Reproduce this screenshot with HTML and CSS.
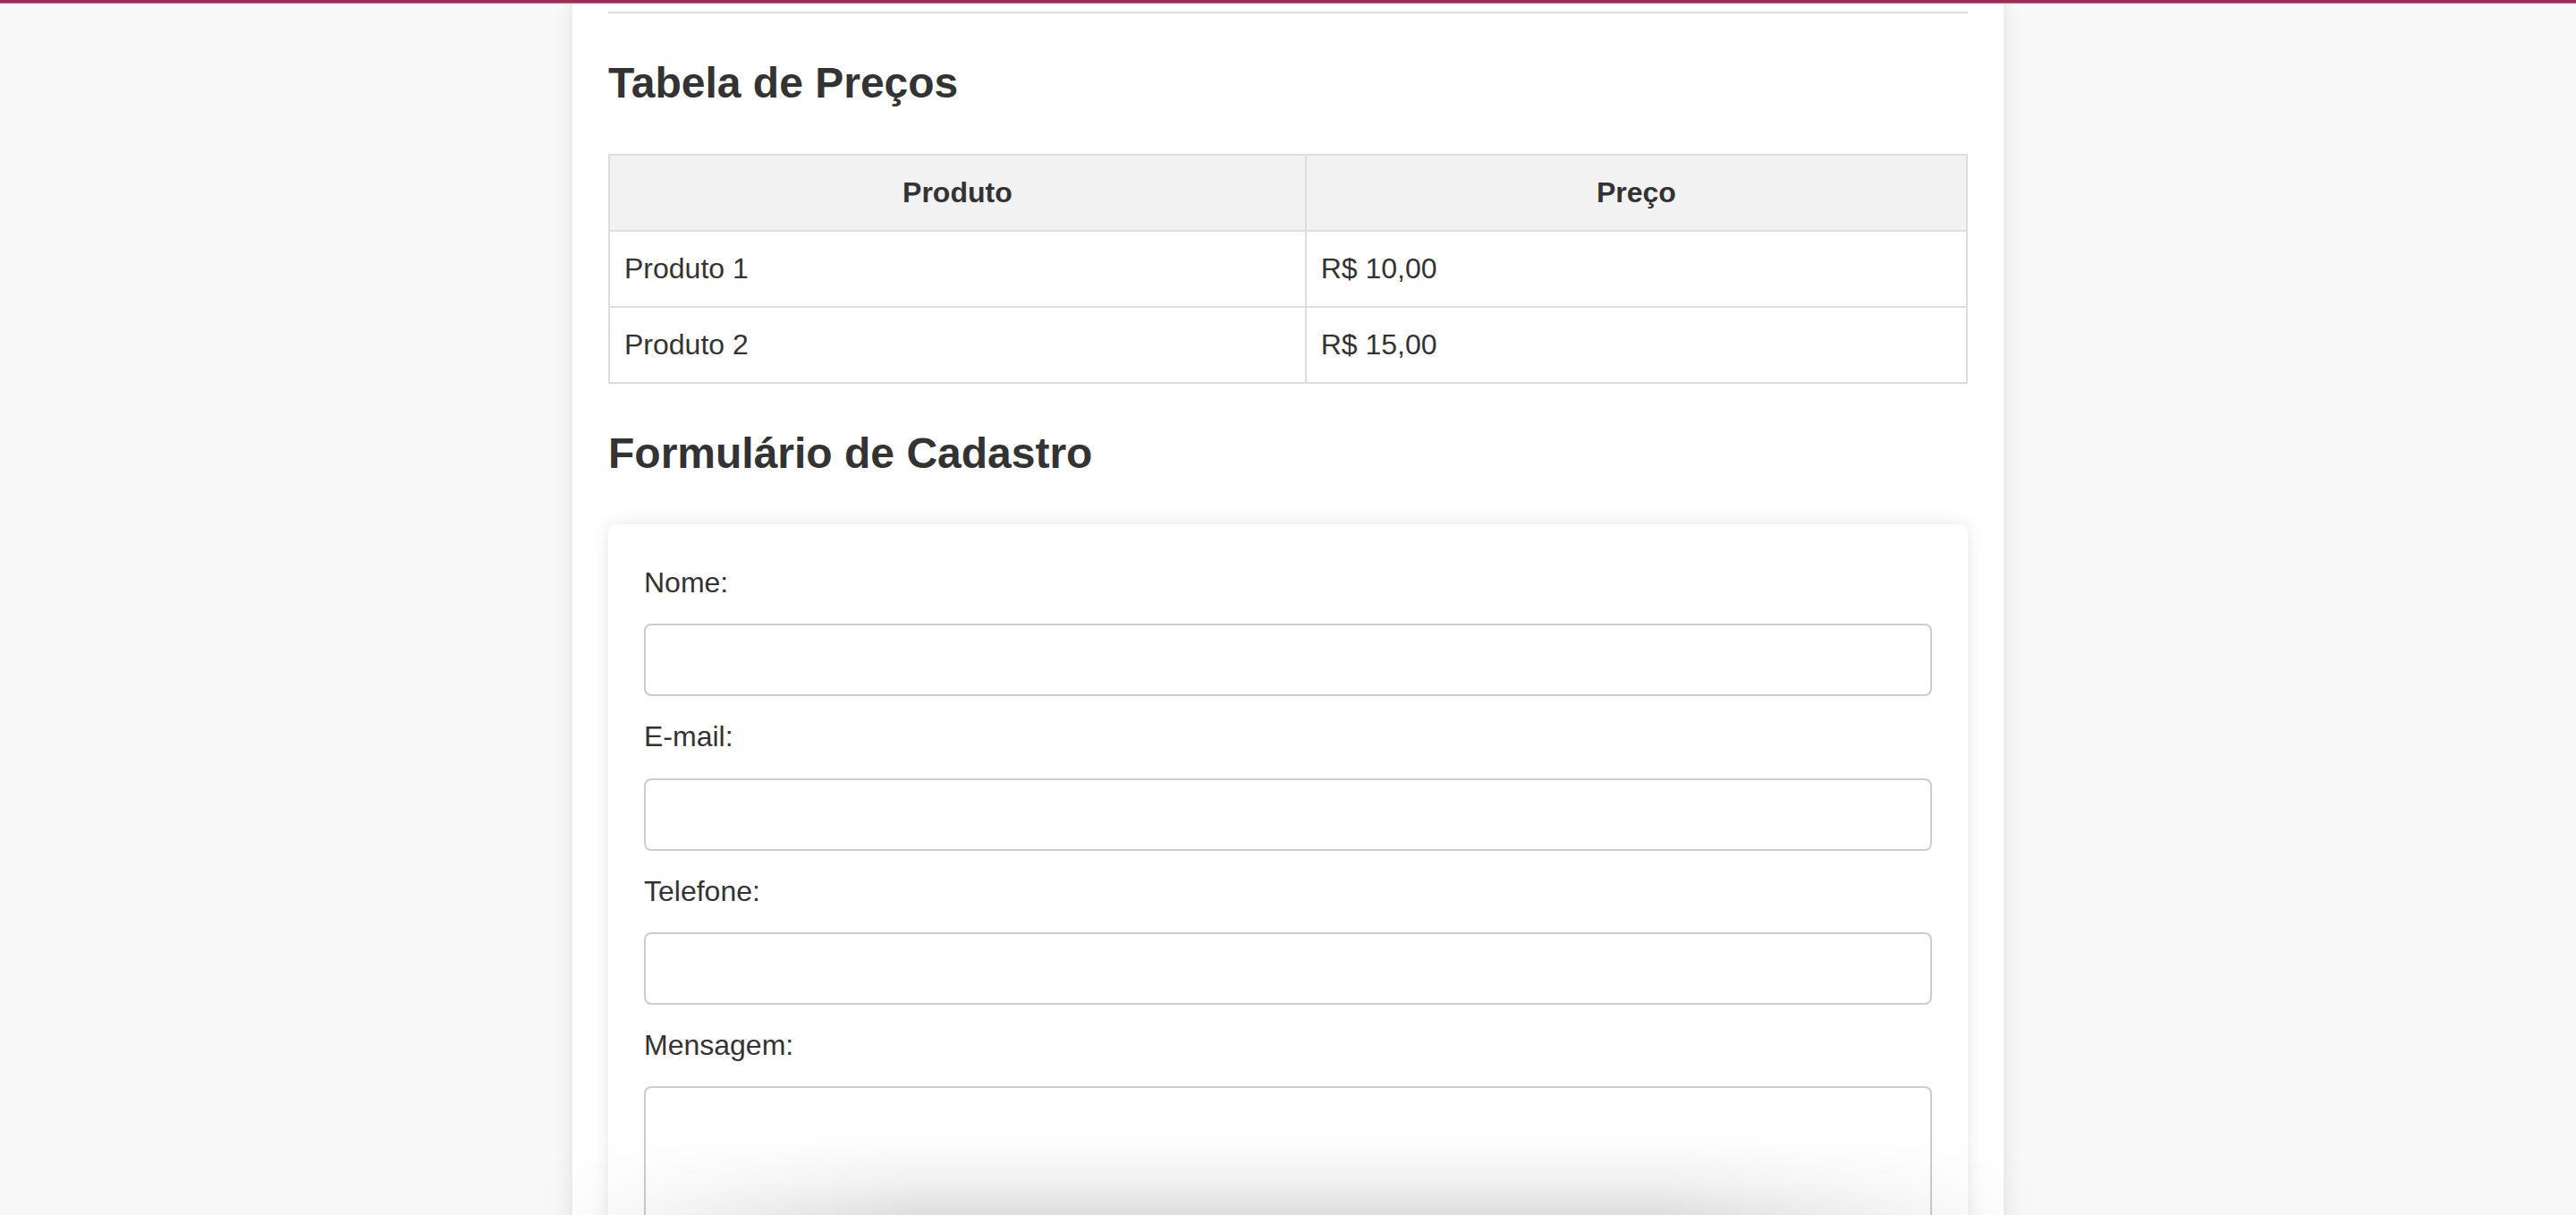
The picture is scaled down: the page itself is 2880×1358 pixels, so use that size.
FILE: index.html
```html
<!DOCTYPE html>
<html lang="pt-BR">
<head>
<meta charset="utf-8">
<title>Tabela de Preços</title>
<link rel="stylesheet" href="styles.css">
</head>
<body>
<div class="topbar"></div>
<main class="container">
  <hr class="divider">
  <h2 class="section-title">Tabela de Preços</h2>
  <table class="price-table">
    <thead>
      <tr><th>Produto</th><th>Preço</th></tr>
    </thead>
    <tbody>
      <tr><td>Produto 1</td><td>R$ 10,00</td></tr>
      <tr><td>Produto 2</td><td>R$ 15,00</td></tr>
    </tbody>
  </table>
  <h2 class="section-title">Formulário de Cadastro</h2>
  <form class="form-card">
    <label class="field-label" for="nome">Nome:</label>
    <input class="field-input" id="nome" type="text">
    <label class="field-label" for="email">E-mail:</label>
    <input class="field-input" id="email" type="email">
    <label class="field-label" for="tel">Telefone:</label>
    <input class="field-input" id="tel" type="tel">
    <label class="field-label" for="msg">Mensagem:</label>
    <textarea class="field-input field-textarea" id="msg"></textarea>
  </form>
</main>
<div class="bottom-shade"></div>
</body>
</html>
```
FILE: styles.css
```css
html, body {
  margin: 0;
  padding: 0;
}
body {
  background: #f8f8f8;
  font-family: "Liberation Sans", Arial, Helvetica, sans-serif;
  font-size: 32px;
  line-height: 1.6;
  color: #333;
  height: 1358px;
  overflow: hidden;
}
.topbar {
  position: fixed;
  top: 0;
  left: 0;
  right: 0;
  height: 3px;
  background: #a02a5a;
  border-bottom: 1px solid #c0708f;
  z-index: 10;
}
.container {
  width: 1600px;
  margin: 0 auto;
  background: #fff;
  box-sizing: border-box;
  padding: 1px 40px 40px;
  box-shadow: 0 0 20px rgba(0, 0, 0, 0.1);
  min-height: 1400px;
}
.divider {
  border: 0;
  border-top: 2px solid #ddd;
  margin: 12px 0 16px;
}
.section-title {
  font-size: 48px;
  font-weight: bold;
  margin: 40px 0;
  line-height: 1.6;
  color: #333;
}
.price-table {
  width: 100%;
  border-collapse: collapse;
  margin-bottom: 40px;
}
.price-table th,
.price-table td {
  border: 2px solid #ddd;
  padding: 16px;
  text-align: left;
}
.price-table th {
  background: #f2f2f2;
  text-align: center;
  font-weight: bold;
}
.price-table th:first-child,
.price-table td:first-child {
  width: 51.3%;
}
.form-card {
  background: #fff;
  padding: 40px;
  border-radius: 10px;
  box-shadow: 0 0 20px rgba(0, 0, 0, 0.1);
}
.field-label {
  display: block;
  margin-bottom: 20px;
}
.field-input {
  display: block;
  width: 100%;
  box-sizing: border-box;
  padding: 20px;
  margin-bottom: 20px;
  border: 2px solid #ccc;
  border-radius: 8px;
  font-family: inherit;
  font-size: 32px;
  line-height: normal;
  background: #fff;
  color: #333;
}
.field-textarea {
  height: 240px;
  resize: vertical;
}
.bottom-shade {
  position: fixed;
  left: 600px;
  width: 1680px;
  bottom: 0;
  height: 90px;
  background: linear-gradient(to top, rgba(0, 0, 0, 0.13), rgba(0, 0, 0, 0.06) 40%, rgba(0, 0, 0, 0));
  -webkit-mask-image: linear-gradient(to right, transparent, #000 25%, #000 75%, transparent);
  mask-image: linear-gradient(to right, transparent, #000 25%, #000 75%, transparent);
  pointer-events: none;
}
```
